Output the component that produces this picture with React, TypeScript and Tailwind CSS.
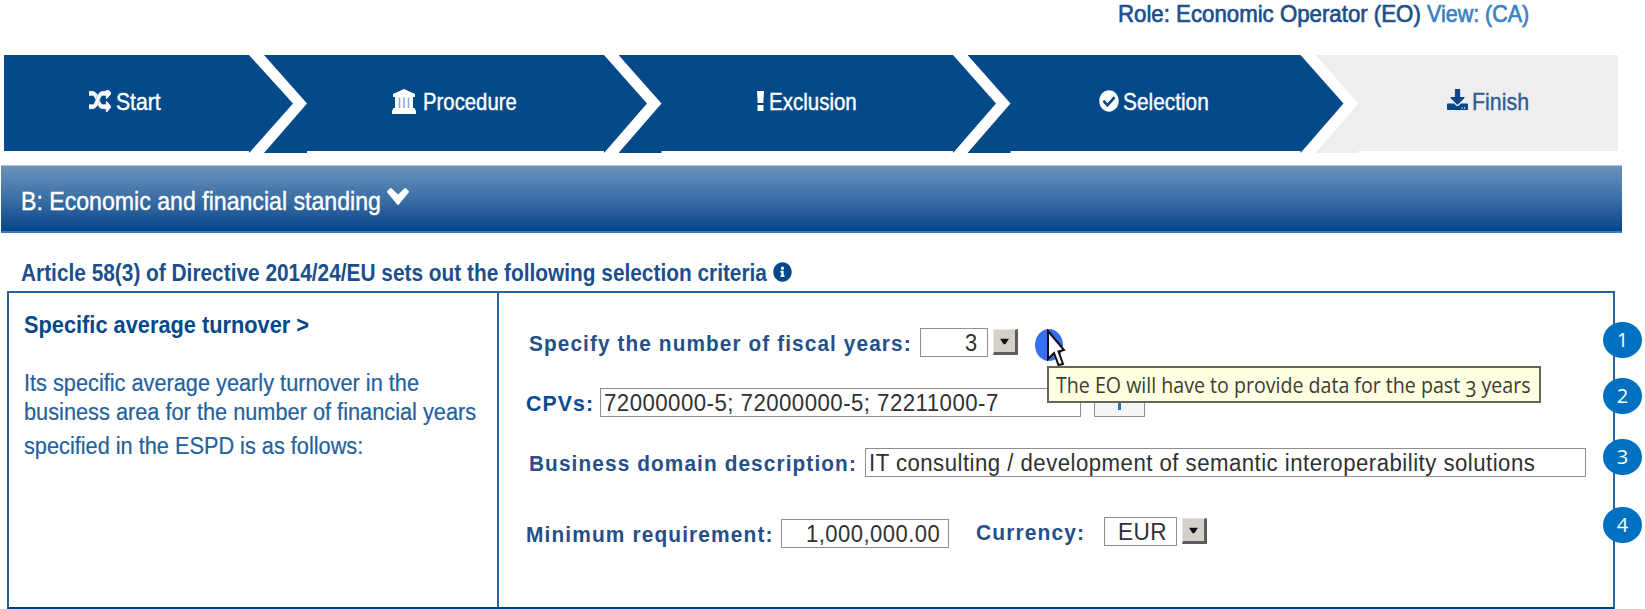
import { useLayoutEffect, useRef, useState } from "react";
import type { ReactNode } from "react";
import { FaCheckCircle, FaDownload, FaInfoCircle } from "react-icons/fa";

type FitProps = { w: number; className?: string; children: ReactNode };

/* Condenses or widens a single line of text so that it fills the given width. */
function Fit({ w, className = "", children }: FitProps) {
  const ref = useRef<HTMLSpanElement>(null);
  const [scale, setScale] = useState(1);
  useLayoutEffect(() => {
    if (ref.current) {
      setScale(w / ref.current.offsetWidth);
    }
  }, [w]);
  return (
    <span className={`block shrink-0 ${className}`} style={{ width: w }}>
      <span ref={ref} className="inline-block origin-left whitespace-nowrap" style={{ transform: `scaleX(${scale})` }}>
        {children}
      </span>
    </span>
  );
}

const label = "text-[22.5px] leading-[31px] font-bold tracking-[1.2px]";
const value = "text-[23.5px] leading-[30px] tracking-[0.5px] text-[#303030]";
const field = "flex h-[29px] shrink-0 items-center border-[1.5px] border-[#8e8e8e] bg-white";

function ShuffleIcon({ className }: { className: string }) {
  return (
    <svg viewBox="0 160 1792 1472" preserveAspectRatio="none" className={className} fill="currentColor">
      <path d="M666 481q-60 92-137 273-22-45-37-72.500t-40.500-63.500-51-56.500-63-35-81.500-14.500h-224q-14 0-23-9t-9-23v-192q0-14 9-23t23-9h224q250 0 410 225zm1126 799q0 14-9 23l-320 320q-9 9-23 9-13 0-22.500-9.500t-9.500-22.500v-192q-32 0-85 .5t-81 1-73-1-71-5-64-10.500-63-18.500-58-28.500-59-40-55-53.500-56-69.500q59-93 136-273 22 45 37 72.500t40.500 63.500 51 56.500 63 35 81.500 14.500h256v-192q0-14 9-23t23-9q12 0 24 10l319 319q9 9 9 23zm0-896q0 14-9 23l-320 320q-9 9-23 9-13 0-22.500-9.500t-9.500-22.500v-192h-256q-48 0-87 15t-69 45-51 61.500-45 77.500q-32 62-78 171-29 66-49.500 111t-54 105-64 100-74 83-90 68.500-106.500 42-128 16.500h-224q-14 0-23-9t-9-23v-192q0-14 9-23t23-9h224q48 0 87-15t69-45 51-61.500 45-77.500q32-62 78-171 29-66 49.500-111t54-105 64-100 74-83 90-68.500 106.500-42 128-16.500h256v-192q0-14 9-23t23-9q12 0 24 10l319 319q9 9 9 23z" stroke="currentColor" strokeWidth="60" />
    </svg>
  );
}

function BankIcon({ className }: { className: string }) {
  return (
    <svg viewBox="0 0 24 25" className={className}>
      <path d="M12 0L23 5V8H1V5ZM3 8H21V19H22.500L24 22V25H0V22L1.500 19H3Z" fill="#fff" />
      <path d="M7.500 8.500V19M12 8.500V19M16.500 8.500V19" stroke="#8fa9dc" strokeWidth="1.6" />
    </svg>
  );
}

function ChevronIcon({ className }: { className: string }) {
  return (
    <svg viewBox="90 530 1612 1040" preserveAspectRatio="none" className={className} fill="currentColor">
      <path d="M1683 808l-742 741q-19 19-45 19t-45-19l-742-741q-19-19-19-45.500t19-45.500l210-165q19-19 45-19t45 19l487 380 487-380q19-19 45-19t45 19l210 165q19 19 19 45.500t-19 45.500z" />
    </svg>
  );
}

function DropButton({ className = "" }: { className?: string }) {
  return (
    <button
      className={`flex h-[26px] w-[25px] shrink-0 items-center justify-center border-t border-r-3 border-b-3 border-l border-t-[#e6e4e0] border-r-[#5c5c5c] border-b-[#5c5c5c] border-l-[#e6e4e0] bg-[#d4d0c8] ${className}`}
    >
      <svg viewBox="0 0 10 7" className="h-[7px] w-[9px]">
        <path d="M0 0.5H10L6 6.5H4Z" fill="#111" />
      </svg>
    </button>
  );
}

const stepText = "text-[24px] leading-[26px] [-webkit-text-stroke:0.4px]";

function Badge({ n, className }: { n: number; className: string }) {
  return (
    <div
      className={`absolute left-[1603px] flex h-[36px] w-[39px] items-center justify-center rounded-[50%] bg-[#0070c0] font-['Open_Sans','Noto_Sans',sans-serif] text-[20px] leading-none text-white ${className}`}
    >
      {n}
    </div>
  );
}

export default function App() {
  return (
    <div className="relative h-[609px] w-[1645px] overflow-hidden bg-white font-['Liberation_Sans',Arial,sans-serif] text-[#04488a]">
      <header className="flex h-[55px] pt-[1px] pl-[1118px] text-[24px] leading-[26px] text-[#1b4f8c] [-webkit-text-stroke:0.7px]">
        <Fit w={303}>Role: Economic Operator (EO)</Fit>
        <Fit w={102} className="ml-[6px] text-[#3a80c4]">View: (CA)</Fit>
      </header>

      <nav className="flex h-[110px] pl-[3.5px] text-white">
        <div className="flex h-[98px] w-[289.5px] shrink-0 bg-[#044a88] pt-[34px] pl-[85px] [clip-path:polygon(0_0,245.5px_0,100%_48.5px,245.5px_98px,245.5px_96px,0_96px)]">
          <ShuffleIcon className="mt-px h-[22px] w-[22px]" />
          <Fit w={45} className={`ml-[5px] ${stepText}`}>Start</Fit>
        </div>
        <div className="-ml-[29px] flex h-[98px] w-[383px] shrink-0 bg-[#044a88] pt-[34px] pl-[128px] [clip-path:polygon(0_0,340px_0,100%_48.5px,340px_98px,340px_96px,43px_96px,43px_98px,0_98px,43px_48.5px)]">
          <BankIcon className="h-[25px] w-[24px]" />
          <Fit w={94} className={`ml-[7px] ${stepText}`}>Procedure</Fit>
        </div>
        <div className="-ml-[28.5px] flex h-[98px] w-[377.5px] shrink-0 bg-[#044a88] pt-[34px] pl-[138px] [clip-path:polygon(0_0,334.5px_0,100%_48.5px,334.5px_98px,334.5px_96px,43px_96px,43px_98px,0_98px,43px_48.5px)]">
          <svg viewBox="0 0 7 20" className="mt-[2px] h-[20px] w-[7px]">
            <path d="M0 0H7L6.300 12H0.700ZM0.500 14H6.500V20H0.500Z" fill="#fff" />
          </svg>
          <Fit w={88} className={`ml-[5px] ${stepText}`}>Exclusion</Fit>
        </div>
        <div className="-ml-[28.5px] flex h-[98px] w-[376px] shrink-0 bg-[#044a88] pt-[34px] pl-[131px] [clip-path:polygon(0_0,333px_0,100%_48.5px,333px_98px,333px_96px,43px_96px,43px_98px,0_98px,43px_48.5px)]">
          <FaCheckCircle className="mt-[1px] h-[22px] w-[20px]" preserveAspectRatio="none" />
          <Fit w={86} className={`ml-[4px] ${stepText}`}>Selection</Fit>
        </div>
        <div className="-ml-[28px] flex h-[98px] w-[302.5px] shrink-0 bg-[#eeeeee] pt-[34px] pl-[131px] text-[#2f5c95] [clip-path:polygon(0_0,100%_0,100%_96px,43px_96px,43px_98px,0_98px,43px_48.5px)]">
          <FaDownload className="h-[21px] w-[21px] text-[#04488a]" />
          <Fit w={57} className={`ml-[4px] ${stepText}`}>Finish</Fit>
        </div>
      </nav>

      <section className="ml-px flex h-[68px] w-[1621px] border-t border-b-2 border-t-[#b4c6d8] border-b-[#3a7cb8] bg-linear-to-b from-[#6a93bb] via-[#3b6fa5] to-[#02458a] pt-[21px] pl-[20px] text-white">
        <Fit w={360} className="text-[25.5px] leading-[28px] [-webkit-text-stroke:0.4px]">B: Economic and financial standing</Fit>
        <ChevronIcon className="mt-px ml-[6px] h-[17px] w-[22px]" />
      </section>

      <h2 className="flex h-[58px] pt-[27px] pl-[21px] text-[24px] leading-[25px] font-bold text-[#1b4f8c]">
        <Fit w={746}>Article 58(3) of Directive 2014/24/EU sets out the following selection criteria</Fit>
        <FaInfoCircle className="mt-[2px] ml-[6px] h-[20px] w-[19px] text-[#04488a]" preserveAspectRatio="none" />
      </h2>

      <main className="ml-[7px] flex h-[318px] w-[1608px] border-2 border-[#2a629c] border-b-[#04408a]">
        <aside className="w-[490px] shrink-0 border-r-2 border-[#2a629c] pl-[14.500px] text-[23px] text-[#24609c]">
          <Fit w={285} className="mt-[18px] leading-[29px] font-bold text-[#04488a]">{"Specific average turnover >"}</Fit>
          <div className="mt-[29px] leading-[29px] [-webkit-text-stroke:0.2px]">
            <Fit w={395}>Its specific average yearly turnover in the</Fit>
            <Fit w={452}>business area for the number of financial years</Fit>
            <Fit w={339} className="mt-[5px]">specified in the ESPD is as follows:</Fit>
          </div>
        </aside>

        <div className="grow pt-[35px] text-[#264f88]">
          <div className="flex h-[60px] pl-[30px]">
            <Fit w={383} className={label}>Specify the number of fiscal years:</Fit>
            <div className={`${field} ml-[8px] w-[68px] justify-end pr-[9px]`}>
              <Fit w={13} className={value}>3</Fit>
            </div>
            <DropButton className="mt-px ml-[5px]" />
            <div className="mt-px ml-[17px] h-[32px] w-[28px] rounded-[50%] bg-[#386ff0]" />
          </div>

          <div className="flex h-[60px] pl-[27px]">
            <Fit w={68} className={`${label} text-[#0a4a90]`}>CPVs:</Fit>
            <div className={`${field} ml-[6px] w-[481px] pl-[3px]`}>
              <Fit w={395} className={value}>72000000-5; 72000000-5; 72211000-7</Fit>
            </div>
            <button className="ml-[13px] flex h-[29px] w-[51px] items-start justify-center border-[1.5px] border-[#8e8e8e] bg-[#f4f5f6] pt-[5px]">
              <svg viewBox="0 0 15 16" className="h-[16px] w-[15px]">
                <path d="M7.5 0V16M0 6H15" stroke="#2f6fb5" strokeWidth="3" />
              </svg>
            </button>
          </div>

          <div className="flex h-[71px] pl-[30px]">
            <Fit w={328} className={label}>Business domain description:</Fit>
            <div className={`${field} ml-[8px] w-[721px] pl-[3px]`}>
              <Fit w={666} className={value}>IT consulting / development of semantic interoperability solutions</Fit>
            </div>
          </div>

          <div className="flex pl-[27px]">
            <Fit w={248} className={label}>Minimum requirement:</Fit>
            <div className={`${field} ml-[7px] w-[168px] justify-end pr-[8px]`}>
              <Fit w={134} className={value}>1,000,000.00</Fit>
            </div>
            <Fit w={109} className={`-mt-[2px] ml-[27px] ${label}`}>Currency:</Fit>
            <div className={`${field} -mt-[2px] ml-[19px] w-[73px] pl-[13px]`}>
              <Fit w={49} className={value}>EUR</Fit>
            </div>
            <DropButton className="-mt-px ml-[5px]" />
          </div>
        </div>
      </main>

      <div className="absolute top-[366px] left-[1047px] flex h-[37px] w-[494px] items-center border-2 border-[#66665a] bg-[#ffffe1] pl-[7px] font-['Open_Sans','Noto_Sans',sans-serif] text-[21px] leading-[30px] text-[#3c3c36]">
        <Fit w={475}>
          The EO will have to provide data for the past <span className="relative top-[4px]">3</span> years
        </Fit>
      </div>

      <svg viewBox="0 0 20 38" className="absolute top-[329px] left-[1046px] h-[38px] w-[20px]">
        <path d="M2 2L18 21L12.5 22.500L17 35L12.500 36L8 24L2 30Z" fill="#fff" stroke="#111" strokeWidth="2" />
      </svg>

      <Badge n={1} className="top-[322px]" />
      <Badge n={2} className="top-[378px]" />
      <Badge n={3} className="top-[439px]" />
      <Badge n={4} className="top-[507px]" />
    </div>
  );
}
